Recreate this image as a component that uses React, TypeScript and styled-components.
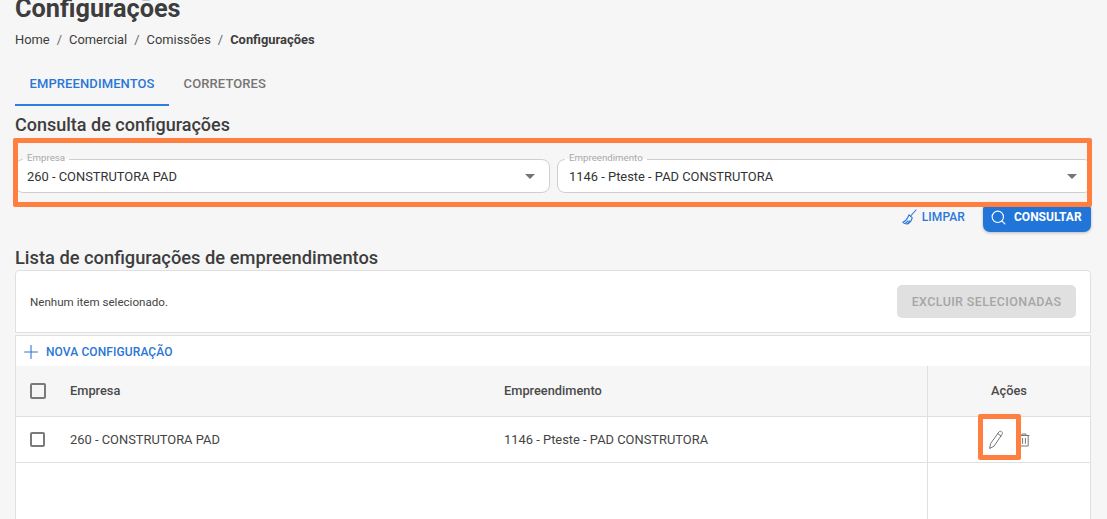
import React from "react";
import styled, { createGlobalStyle } from "styled-components";
import { Search, Plus } from "lucide-react";

const Global = createGlobalStyle`
  html, body { margin: 0; padding: 0; height: 519px; overflow: hidden; background: #f6f6f6; }
  * { box-sizing: border-box; }
  body { font-family: Roboto, "Liberation Sans", sans-serif; color: #3d3d3d; }
`;

const Page = styled.div`
  position: relative;
  width: 1107px;
  height: 519px;
  overflow: hidden;
  padding: 0 16px 0 15px;
`;
const Title = styled.h1`
  margin: -6px 0 0;
  height: 30px;
  font-size: 25.3px;
  line-height: 30px;
  font-weight: 700;
  color: #3d3d3d;
`;
const Crumbs = styled.nav`
  display: flex;
  gap: 7px;
  margin-top: 8px;
  height: 16px;
  font-size: 12.9px;
  line-height: 16px;
  color: #3d3d3d;
`;
const CrumbSep = styled.span`
  color: #666;
`;
const CrumbCurrent = styled.span`
  font-weight: 700;
`;
const Tabs = styled.div`
  display: flex;
  margin-top: 14px;
`;
const Tab = styled.div<{ $active?: boolean }>`
  height: 44px;
  padding: 0 14.5px;
  display: flex;
  align-items: center;
  font-size: 13px;
  font-weight: 500;
  letter-spacing: 0.1px;
  color: ${(p) => (p.$active ? "#2a76d8" : "#757575")};
  border-bottom: 2px solid ${(p) => (p.$active ? "#2f7de1" : "transparent")};
`;
const SectionTitle = styled.h2<{ $top: number; $size: number }>`
  margin: ${(p) => p.$top}px 0 0;
  height: 22px;
  font-size: ${(p) => p.$size}px;
  line-height: 22px;
  font-weight: 500;
  color: #3d3d3d;
`;
const Filters = styled.div`
  display: grid;
  grid-template-columns: 535px 535px;
  gap: 7px;
  margin-top: 18px;
`;
const Field = styled.fieldset`
  position: relative;
  margin: 0;
  padding: 0 12px;
  height: 39px;
  border: 0;
  min-width: 0;
`;
const FieldFrame = styled.div`
  position: absolute;
  inset: 5px 0 0 0;
  border: 1px solid #cfcfcf;
  border-radius: 8px;
  background: #fff;
`;
const FieldLabel = styled.span`
  position: absolute;
  left: 8px;
  top: -2px;
  padding: 0 4px;
  font-size: 9.7px;
  line-height: 11px;
  color: #a9a9a9;
  background: linear-gradient(#f6f6f6 7px, #fff 7px);
`;
const FieldValue = styled.span`
  position: relative;
  display: block;
  padding-top: 14px;
  font-size: 12.9px;
  line-height: 17px;
  color: #333;
`;
const Caret = styled.span`
  position: absolute;
  right: 15px;
  top: 20px;
  width: 0;
  height: 0;
  border-left: 5px solid transparent;
  border-right: 5px solid transparent;
  border-top: 5px solid #757575;
`;
const Actions = styled.div`
  display: flex;
  justify-content: flex-end;
  align-items: center;
  gap: 18px;
  margin-top: 9px;
  height: 30px;
`;
const GhostButton = styled.button`
  display: flex;
  align-items: center;
  gap: 5px;
  padding: 0;
  border: 0;
  background: none;
  font: 500 12px Roboto, sans-serif;
  letter-spacing: 0.1px;
  color: #2a76d8;
`;
const PrimaryButton = styled.button`
  display: flex;
  align-items: center;
  gap: 7px;
  width: 108px;
  height: 30px;
  padding: 0 0 0 7px;
  border: 0;
  border-radius: 7px;
  background: #2175d9;
  color: #fff;
  font: 700 12px Roboto, sans-serif;
  box-shadow: 0 1px 3px rgba(0, 0, 0, 0.25);
`;
const SelectionCard = styled.div`
  display: flex;
  align-items: center;
  justify-content: space-between;
  height: 63px;
  margin-top: 1px;
  padding: 0 14px;
  background: #fff;
  border: 1px solid #e0e0e0;
  border-radius: 4px 4px 0 0;
  font-size: 11.6px;
  color: #444;
`;
const DisabledButton = styled.button`
  width: 179px;
  height: 33px;
  border: 0;
  border-radius: 5px;
  background: #e0e0e0;
  color: #a6a6a6;
  font: 500 12.5px Roboto, sans-serif;
  letter-spacing: 0.38px;
`;
const TableCard = styled.div`
  margin-top: 2px;
  background: #fff;
  border-left: 1px solid #e0e0e0;
  border-right: 1px solid #e0e0e0;
  border-top: 1px solid #e0e0e0;
`;
const NewButton = styled.div`
  display: flex;
  align-items: center;
  gap: 4.5px;
  height: 30px;
  padding: 2px 0 0 3.5px;
  font-size: 12px;
  font-weight: 500;
  letter-spacing: 0.1px;
  color: #2a76d8;
`;
const Row = styled.div<{ $head?: boolean }>`
  display: grid;
  grid-template-columns: 54px 434px 423px 1fr;
  align-items: center;
  height: ${(p) => (p.$head ? "51px" : "46px")};
  font-size: ${(p) => (p.$head ? "12.8px" : "12.9px")};
  font-weight: ${(p) => (p.$head ? 500 : 400)};
  color: ${(p) => (p.$head ? "#4a4a4a" : "#444")};
  background: ${(p) => (p.$head ? "#f6f6f6" : "#fff")};
  border-bottom: 1px solid #e0e0e0;
`;
const HeadLabel = styled.span`
  margin-top: -2px;
`;
const CheckCell = styled.div`
  display: flex;
  padding-left: 14px;
`;
const CheckBox = styled.span<{ $size: number }>`
  display: block;
  width: ${(p) => p.$size}px;
  height: ${(p) => p.$size}px;
  border: 2px solid #7a7a7a;
  border-radius: 2px;
`;
const HeadAction = styled.div`
  height: 100%;
  display: flex;
  align-items: center;
  justify-content: center;
  border-left: 1px solid #e0e0e0;
`;
const ActionCell = styled(HeadAction)`
  gap: 14px;
`;
const IconSlot = styled.span`
  display: flex;
  color: #777;
`;
const EmptyArea = styled.div`
  display: flex;
  justify-content: flex-end;
  height: 80px;
`;
const EmptyColumn = styled.div`
  width: 163px;
  border-left: 1px solid #e0e0e0;
`;
const Highlight = styled.div<{ $x: number; $y: number; $w: number; $h: number }>`
  position: absolute;
  left: ${(p) => p.$x}px;
  top: ${(p) => p.$y}px;
  width: ${(p) => p.$w}px;
  height: ${(p) => p.$h}px;
  border: 5px solid #ff7f41;
  border-radius: 2px;
  pointer-events: none;
`;

const BroomIcon = () => (
  <svg width="15" height="16" viewBox="0 0 15 16" fill="none" stroke="currentColor" strokeWidth="1.1" strokeLinejoin="round" strokeLinecap="round">
    <path d="M14 1 L8.6 7" />
    <path d="M7 5.8 L10.2 8.6 C9.8 11 8 13.6 5.4 15 C3.8 15 1.6 14.4 0.8 13.2 C3 12.8 5.6 9.6 7 5.8 Z" />
    <path d="M3.4 14.4 L6 11.8 M5.8 14.6 L7.6 12" />
  </svg>
);
const PencilIcon = () => (
  <svg width="16" height="20" viewBox="0 0 16 20" fill="none" stroke="currentColor" strokeWidth="1" strokeLinejoin="round">
    <path d="M11 1.8 C11.8 1 13 1.1 13.8 1.8 C14.6 2.6 14.6 3.6 14 4.4 L6 16.2 L1.6 18.5 L2.6 13.6 Z" />
    <path d="M9.6 3.6 L13.4 6.2" />
  </svg>
);
const TrashIcon = () => (
  <svg width="12" height="14" viewBox="0 0 12 14" fill="none" stroke="currentColor" strokeWidth="1">
    <path d="M0.5 2.5 H11.5 M4 2.5 V1 H8 V2.5 M1.8 2.5 V13 H10.2 V2.5" />
    <path d="M4.6 5 V10.8 M7.4 5 V10.8" />
  </svg>
);

export default function App() {
  return (
    <Page>
      <Global />
      <Title>Configurações</Title>
      <Crumbs>
        <span>Home</span>
        <CrumbSep>/</CrumbSep>
        <span>Comercial</span>
        <CrumbSep>/</CrumbSep>
        <span>Comissões</span>
        <CrumbSep>/</CrumbSep>
        <CrumbCurrent>Configurações</CrumbCurrent>
      </Crumbs>
      <Tabs>
        <Tab $active>EMPREENDIMENTOS</Tab>
        <Tab>CORRETORES</Tab>
      </Tabs>
      <SectionTitle $top={8} $size={18}>Consulta de configurações</SectionTitle>
      <Filters>
        <Field>
          <FieldFrame />
          <FieldLabel>Empresa</FieldLabel>
          <FieldValue>260 - CONSTRUTORA PAD</FieldValue>
          <Caret />
        </Field>
        <Field>
          <FieldFrame />
          <FieldLabel>Empreendimento</FieldLabel>
          <FieldValue>1146 - Pteste - PAD CONSTRUTORA</FieldValue>
          <Caret />
        </Field>
      </Filters>
      <Actions>
        <GhostButton>
          <BroomIcon />
          LIMPAR
        </GhostButton>
        <PrimaryButton>
          <Search size={17} strokeWidth={1.6} />
          CONSULTAR
        </PrimaryButton>
      </Actions>
      <SectionTitle $top={15} $size={18.3}>Lista de configurações de empreendimentos</SectionTitle>
      <SelectionCard>
        <span>Nenhum item selecionado.</span>
        <DisabledButton>EXCLUIR SELECIONADAS</DisabledButton>
      </SelectionCard>
      <TableCard>
        <NewButton>
          <Plus size={22} strokeWidth={1.2} />
          NOVA CONFIGURAÇÃO
        </NewButton>
        <Row $head>
          <CheckCell><CheckBox $size={16} /></CheckCell>
          <HeadLabel>Empresa</HeadLabel>
          <HeadLabel>Empreendimento</HeadLabel>
          <HeadAction><HeadLabel>Ações</HeadLabel></HeadAction>
        </Row>
        <Row>
          <CheckCell><CheckBox $size={15} /></CheckCell>
          <span>260 - CONSTRUTORA PAD</span>
          <span>1146 - Pteste - PAD CONSTRUTORA</span>
          <ActionCell>
            <IconSlot><PencilIcon /></IconSlot>
            <IconSlot><TrashIcon /></IconSlot>
          </ActionCell>
        </Row>
        <EmptyArea><EmptyColumn /></EmptyArea>
      </TableCard>
      <Highlight $x={13} $y={138} $w={1079} $h={69} />
      <Highlight $x={978} $y={414} $w={43} $h={46} />
    </Page>
  );
}
